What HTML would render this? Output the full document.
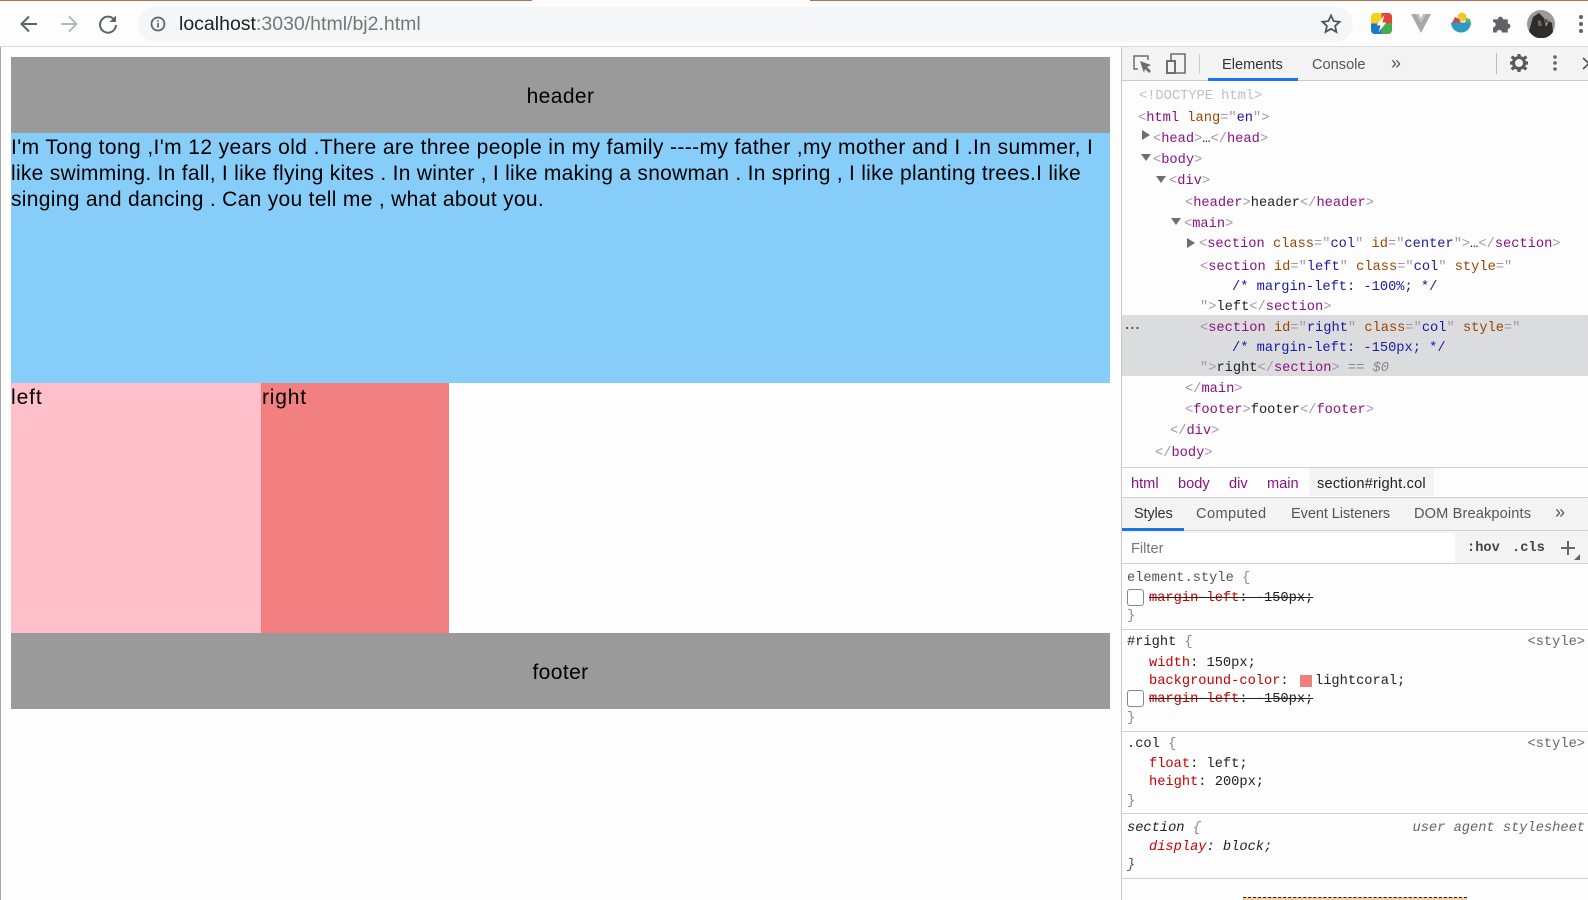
<!DOCTYPE html>
<html lang="en"><head><meta charset="utf-8"><title>localhost:3030/html/bj2.html</title>
<style>
html,body{margin:0;padding:0;width:1588px;height:900px;overflow:hidden;background:#fdfdfd;font-family:"Liberation Sans",sans-serif}
div,span.a{position:absolute}
.t{white-space:pre;color:#000}
.p{font-size:21px;line-height:26px;height:26px}
.h{font-size:21px;line-height:26px;letter-spacing:.4px}
.m{font-family:"Liberation Mono",monospace;font-size:13.7px;line-height:20px;height:20px;white-space:pre;color:#222;margin-top:2px}
.u{font-size:14.6px;line-height:20px;height:20px;white-space:pre;color:#555;margin-top:1px}
.g{color:#a894a6}.k{color:#881280}.n{color:#994500}.v{color:#1a1aa6}
.r{color:#c80000}
.s{text-decoration:line-through;text-decoration-color:#222}
.b{background:repeating-conic-gradient(#eeeeee 0 25%,#f9f9f9 0 50%) 0 0/2px 2px}
.gr{background:repeating-conic-gradient(#969696 0 25%,#9e9e9e 0 50%) 0 0/2px 2px}
.l{background:#d0d0d0;height:1px}
.cb{width:15px;height:15px;border:1px solid #888;border-radius:3px;background:#fff;left:1127px}
svg{position:absolute}
</style></head><body>
<!-- browser chrome -->
<div style="left:0;top:0;width:532px;height:1px;background:#a5745c"></div>
<div style="left:810px;top:0;width:778px;height:1px;background:#a5745c"></div>
<div style="left:0;top:46px;width:1588px;height:1px;background:#dadce0"></div>
<div style="left:0;top:47px;width:1px;height:853px;background:#aaa"></div>
<svg style="left:17px;top:12px" width="24" height="24" viewBox="0 0 24 24" fill="none" stroke="#5f6368" stroke-width="2"><path d="M20 12H5M12 4.500L4.500 12l7.500 7.500"/></svg>
<svg style="left:57px;top:12px" width="24" height="24" viewBox="0 0 24 24" fill="none" stroke="#b4b7bb" stroke-width="2"><path d="M4 12h15M12 4.500l7.500 7.500-7.500 7.500"/></svg>
<svg style="left:96px;top:12px" width="24" height="24" viewBox="0 0 24 24" fill="none" stroke="#5f6368" stroke-width="2"><path d="M18.500 8A8 8 0 1 0 20 13"/><path d="M20 3.500V10h-6.500z" fill="#5f6368" stroke="none"/></svg>
<div style="left:138px;top:7px;width:1215px;height:35px;border-radius:18px;background:repeating-conic-gradient(#eef2f5 0 25%,#fafbfc 0 50%) 0 0/2px 2px"></div>
<svg style="left:150px;top:16px" width="16" height="16" viewBox="0 0 16 16" fill="none" stroke="#5f6368" stroke-width="1.700"><circle cx="8" cy="8" r="6.500"/><path d="M8 7v4.500M8 4.200v1.600"/></svg>
<div class="t" style="left:179px;top:12px;font-size:19.500px;line-height:24px;color:#777"><span style="color:#222">localhost</span>:3030/html/bj2.html</div>
<svg style="left:1320px;top:13px" width="22" height="22" viewBox="0 0 22 22" fill="none" stroke="#555" stroke-width="1.800"><path d="M11 2.500l2.600 5.600 6 .7-4.500 4.100 1.300 6-5.400-3.100-5.400 3.100 1.300-6L2.400 8.800l6-.7z"/></svg>
<svg style="left:1371px;top:13px" width="21" height="21" viewBox="0 0 22 22"><rect width="22" height="22" rx="4" fill="#f5d020"/><path d="M11 0h7a4 4 0 0 1 4 4v7H11z" fill="#e5413a"/><path d="M11 11h11v7a4 4 0 0 1-4 4h-7z" fill="#45ae50"/><path d="M0 11h11v11H4a4 4 0 0 1-4-4z" fill="#1c78c8"/><path d="M14 2L6 13h4l-2 7 8-10h-4z" fill="#fff"/></svg>
<svg style="left:1411px;top:14px" width="20" height="19" viewBox="0 0 20 19"><path d="M0 0h7l3 5 3-5h7L10 19z" fill="#a8a8a8"/><path d="M5 0h3l2 4 2-4h3l-5 9z" fill="#c4c4c4"/></svg>
<svg style="left:1451px;top:12px" width="20" height="23" viewBox="0 0 20 23"><circle cx="11" cy="5" r="4.500" fill="#f5c32c"/><path d="M1 11l3-6 4 2 2 4z" fill="#c9484a"/><path d="M14 11l1-5 4 1 1 4z" fill="#5cb85c"/><path d="M0 10.500h20a10 10 0 0 1-20 0z" fill="#2e9ac0"/></svg>
<svg style="left:1492px;top:13px" width="20" height="20" viewBox="0 0 19 19"><path d="M1 6h4.500a2.500 2.500 0 0 1 5 0H15v4a2.500 2.500 0 0 1 0 5v3.500H9.500a2.500 2.500 0 0 0-5 0H1v-5a2.500 2.500 0 0 0 0-5z" fill="#5f6368"/></svg>
<svg style="left:1527px;top:10px" width="28" height="28" viewBox="0 0 28 28"><circle cx="14" cy="14" r="14" fill="#9a9a9a"/><path d="M2 21a14 14 0 0 0 24 1l-1-9-3-2-3 6-2-9-5-5-6 4-2 7z" fill="#2f2c2c"/><circle cx="19" cy="11" r="2" fill="#555"/><path d="M11 10l3 1 1 5-4 0z" fill="#666"/></svg>
<svg style="left:1576px;top:14px" width="10" height="20" viewBox="0 0 10 20" fill="#5f6368"><circle cx="5" cy="3" r="2"/><circle cx="5" cy="10" r="2"/><circle cx="5" cy="17" r="2"/></svg>
<!-- page -->
<div class="gr" style="left:11px;top:57px;width:1099px;height:76px"></div>
<div class="t h" style="left:11px;width:1099px;top:84px;text-align:center">header</div>
<div style="left:11px;top:133px;width:1099px;height:250px;background:#87cdf9"></div>
<div class="t p" style="left:11px;top:135px;letter-spacing:.39px">I'm Tong tong ,I'm 12 years old .There are three people in my family ----my father ,my mother and I .In summer, I</div>
<div class="t p" style="left:11px;top:161px;letter-spacing:.28px">like swimming. In fall, I like flying kites . In winter , I like making a snowman . In spring , I like planting trees.I like</div>
<div class="t p" style="left:11px;top:187px;letter-spacing:.31px">singing and dancing . Can you tell me , what about you.</div>
<div style="left:11px;top:383px;width:250px;height:250px;background:#ffc0cb"></div>
<div style="left:261px;top:383px;width:188px;height:250px;background:#f28080"></div>
<div class="t h" style="left:11px;top:385px;letter-spacing:.9px">left</div>
<div class="t h" style="left:262px;top:385px;letter-spacing:.8px">right</div>
<div class="gr" style="left:11px;top:633px;width:1099px;height:76px"></div>
<div class="t h" style="left:11px;width:1099px;top:660px;text-align:center">footer</div>
<!-- devtools -->
<div style="left:1121px;top:47px;width:1px;height:853px;background:#c8c8c8"></div>
<div class="b" style="left:1122px;top:47px;width:466px;height:33px"></div>
<div style="left:1122px;top:80px;width:466px;height:1px;background:#ccc"></div>
<svg style="left:1133px;top:55px" width="20" height="18" viewBox="0 0 20 18" fill="none" stroke="#6e6e6e" stroke-width="1.500"><path d="M5 14H1V1h14v4"/><path d="M7 6l11 4-4 2 4 4-2 2-4-4-1 4z" fill="#6e6e6e" stroke="none"/></svg>
<svg style="left:1166px;top:53px" width="20" height="21" viewBox="0 0 20 21" fill="none" stroke="#6e6e6e" stroke-width="1.600"><path d="M5 8V1h14v19H9"/><rect x="1" y="8" width="8" height="12" stroke-width="2"/></svg>
<div style="left:1199px;top:54px;width:1px;height:20px;background:#ccc"></div>
<div class="u" style="left:1222px;top:54px;color:#333">Elements</div>
<div style="left:1208px;top:78px;width:90px;height:3px;background:#1a73e8"></div>
<div class="u" style="left:1312px;top:54px">Console</div>
<div class="u" style="left:1391px;top:52px;font-size:18px;color:#555">»</div>
<div style="left:1496px;top:53px;width:1px;height:21px;background:#bbb"></div>
<svg style="left:1510px;top:54px" width="18" height="18" viewBox="0 0 18 18"><circle cx="9" cy="9" r="5.500" fill="none" stroke="#5a5a5a" stroke-width="3"/><path d="M7.500 0h3l.4 3h-3.800zM7.500 18h3l.4-3H7.100zM0 7.500v3l3 .4V7.100zM18 7.500v3l-3 .4V7.100zM2.600 1.500L.6 3.600l2.200 2.200 2.500-2.300zM15.400 16.500l2-2.100-2.200-2.200-2.500 2.300zM.6 14.400l2 2.100 2.700-2-2.500-2.300zM17.400 3.600l-2-2.100-2.700 2 2.500 2.300z" fill="#5a5a5a"/></svg>
<svg style="left:1551px;top:54px" width="8" height="18" viewBox="0 0 8 18" fill="#666"><circle cx="4" cy="3" r="1.800"/><circle cx="4" cy="9" r="1.800"/><circle cx="4" cy="15" r="1.800"/></svg>
<svg style="left:1582px;top:57px" width="6" height="13" viewBox="0 0 6 13" fill="none" stroke="#555" stroke-width="1.800"><path d="M1 1l6 5.500L1 12"/></svg>
<!-- selected row -->
<div style="left:1122px;top:315px;width:466px;height:61px;background:repeating-conic-gradient(#d5d5dc 0 25%,#e2e2e0 0 50%) 0 0/2px 2px"></div>
<div class="m" style="left:1123px;top:315px;color:#555;font-weight:bold;letter-spacing:-3px">...</div>
<!-- DOM -->
<div class="m" style="left:1139px;top:85px;color:#c0c0c0">&lt;!DOCTYPE html&gt;</div>
<div class="m" style="left:1138px;top:107px"><span class="g">&lt;</span><span class="k">html</span> <span class="n">lang</span><span class="g">="</span><span class="v">en</span><span class="g">"&gt;</span></div>
<svg style="left:1142px;top:130px" width="8" height="10"><path d="M0 0l8 5-8 5z" fill="#6e6e6e"/></svg>
<div class="m" style="left:1153px;top:128px"><span class="g">&lt;</span><span class="k">head</span><span class="g">&gt;</span>…<span class="g">&lt;/</span><span class="k">head</span><span class="g">&gt;</span></div>
<svg style="left:1141px;top:154px" width="10" height="7"><path d="M0 0h10L5 7z" fill="#6e6e6e"/></svg>
<div class="m" style="left:1153px;top:149px"><span class="g">&lt;</span><span class="k">body</span><span class="g">&gt;</span></div>
<svg style="left:1156px;top:176px" width="10" height="7"><path d="M0 0h10L5 7z" fill="#6e6e6e"/></svg>
<div class="m" style="left:1169px;top:170px"><span class="g">&lt;</span><span class="k">div</span><span class="g">&gt;</span></div>
<div class="m" style="left:1185px;top:192px"><span class="g">&lt;</span><span class="k">header</span><span class="g">&gt;</span>header<span class="g">&lt;/</span><span class="k">header</span><span class="g">&gt;</span></div>
<svg style="left:1171px;top:218px" width="10" height="7"><path d="M0 0h10L5 7z" fill="#6e6e6e"/></svg>
<div class="m" style="left:1184px;top:213px"><span class="g">&lt;</span><span class="k">main</span><span class="g">&gt;</span></div>
<svg style="left:1187px;top:238px" width="8" height="10"><path d="M0 0l8 5-8 5z" fill="#6e6e6e"/></svg>
<div class="m" style="left:1199px;top:233px"><span class="g">&lt;</span><span class="k">section</span> <span class="n">class</span><span class="g">="</span><span class="v">col</span><span class="g">"</span> <span class="n">id</span><span class="g">="</span><span class="v">center</span><span class="g">"&gt;</span>…<span class="g">&lt;/</span><span class="k">section</span><span class="g">&gt;</span></div>
<div class="m" style="left:1200px;top:256px"><span class="g">&lt;</span><span class="k">section</span> <span class="n">id</span><span class="g">="</span><span class="v">left</span><span class="g">"</span> <span class="n">class</span><span class="g">="</span><span class="v">col</span><span class="g">"</span> <span class="n">style</span><span class="g">="</span></div>
<div class="m" style="left:1232px;top:276px;color:#1a1aa6">/* margin-left: -100%; */</div>
<div class="m" style="left:1200px;top:296px"><span class="g">"&gt;</span>left<span class="g">&lt;/</span><span class="k">section</span><span class="g">&gt;</span></div>
<div class="m" style="left:1200px;top:317px"><span class="g">&lt;</span><span class="k">section</span> <span class="n">id</span><span class="g">="</span><span class="v">right</span><span class="g">"</span> <span class="n">class</span><span class="g">="</span><span class="v">col</span><span class="g">"</span> <span class="n">style</span><span class="g">="</span></div>
<div class="m" style="left:1232px;top:337px;color:#1a1aa6">/* margin-left: -150px; */</div>
<div class="m" style="left:1200px;top:357px"><span class="g">"&gt;</span>right<span class="g">&lt;/</span><span class="k">section</span><span class="g">&gt;</span> <span style="color:#888">== <i>$0</i></span></div>
<div class="m" style="left:1185px;top:378px"><span class="g">&lt;/</span><span class="k">main</span><span class="g">&gt;</span></div>
<div class="m" style="left:1185px;top:399px"><span class="g">&lt;</span><span class="k">footer</span><span class="g">&gt;</span>footer<span class="g">&lt;/</span><span class="k">footer</span><span class="g">&gt;</span></div>
<div class="m" style="left:1170px;top:420px"><span class="g">&lt;/</span><span class="k">div</span><span class="g">&gt;</span></div>
<div class="m" style="left:1155px;top:442px"><span class="g">&lt;/</span><span class="k">body</span><span class="g">&gt;</span></div>
<!-- breadcrumbs -->
<div class="l" style="left:1122px;top:467px;width:466px"></div>
<div class="b" style="left:1309px;top:468px;width:125px;height:28px"></div>
<div class="u" style="left:1131px;top:473px;color:#881280">html</div>
<div class="u" style="left:1178px;top:473px;color:#881280">body</div>
<div class="u" style="left:1229px;top:473px;color:#881280">div</div>
<div class="u" style="left:1267px;top:473px;color:#881280">main</div>
<div class="u" style="left:1317px;top:473px;color:#222;letter-spacing:.2px">section#right.col</div>
<div class="l" style="left:1122px;top:497px;width:466px"></div>
<!-- style tabs -->
<div class="b" style="left:1122px;top:498px;width:466px;height:32px"></div>
<div class="l" style="left:1122px;top:530px;width:466px"></div>
<div style="left:1122px;top:528px;width:62px;height:3px;background:#1a73e8"></div>
<div class="u" style="left:1134px;top:503px;color:#333;letter-spacing:-.2px">Styles</div>
<div class="u" style="left:1196px;top:503px;letter-spacing:.4px">Computed</div>
<div class="u" style="left:1291px;top:503px;letter-spacing:-.1px">Event Listeners</div>
<div class="u" style="left:1414px;top:503px;letter-spacing:.13px">DOM Breakpoints</div>
<div class="u" style="left:1555px;top:501px;font-size:18px">»</div>
<!-- filter -->
<div class="b" style="left:1122px;top:531px;width:466px;height:32px"></div>
<div style="left:1122px;top:533px;width:333px;height:30px;background:#fff"></div>
<div class="u" style="left:1131px;top:538px;color:#777">Filter</div>
<div class="m" style="left:1467px;top:537px;font-weight:bold;color:#444">:hov</div>
<div class="m" style="left:1512px;top:537px;font-weight:bold;color:#444">.cls</div>
<svg style="left:1561px;top:541px" width="14" height="14"><path d="M7 0v14M0 7h14" stroke="#666" stroke-width="2"/></svg>
<svg style="left:1574px;top:554px" width="6" height="6"><path d="M6 0v6H0z" fill="#666"/></svg>
<div class="l" style="left:1122px;top:563px;width:466px"></div>
<!-- styles -->
<div class="m" style="left:1127px;top:567px;color:#555">element.style <span style="color:#888">{</span></div>
<div class="cb" style="top:589px"></div>
<div class="m s" style="left:1149px;top:587px"><span class="r">margin-left</span>: -150px;</div>
<div class="m" style="left:1127px;top:605px;color:#888">}</div>
<div class="l" style="left:1122px;top:629px;width:466px"></div>
<div class="m" style="left:1127px;top:631px">#right <span style="color:#888">{</span></div>
<div class="m" style="right:3px;top:631px;color:#666">&lt;style&gt;</div>
<div class="m" style="left:1149px;top:652px"><span class="r">width</span>: 150px;</div>
<div class="m" style="left:1149px;top:670px"><span class="r">background-color</span>:</div>
<div style="left:1300px;top:675px;width:12px;height:12px;background:#f08080"></div>
<div class="m" style="left:1315px;top:670px">lightcoral;</div>
<div class="cb" style="top:690px"></div>
<div class="m s" style="left:1149px;top:688px"><span class="r">margin-left</span>: -150px;</div>
<div class="m" style="left:1127px;top:707px;color:#888">}</div>
<div class="l" style="left:1122px;top:731px;width:466px"></div>
<div class="m" style="left:1127px;top:733px">.col <span style="color:#888">{</span></div>
<div class="m" style="right:3px;top:733px;color:#666">&lt;style&gt;</div>
<div class="m" style="left:1149px;top:753px"><span class="r">float</span>: left;</div>
<div class="m" style="left:1149px;top:771px"><span class="r">height</span>: 200px;</div>
<div class="m" style="left:1127px;top:790px;color:#888">}</div>
<div class="l" style="left:1122px;top:813px;width:466px"></div>
<div class="m" style="left:1127px;top:817px;font-style:italic">section <span style="color:#888">{</span></div>
<div class="m" style="right:3px;top:817px;color:#666;font-style:italic">user agent stylesheet</div>
<div class="m" style="left:1149px;top:836px;font-style:italic"><span class="r">display</span>: block;</div>
<div class="m" style="left:1127px;top:854px;font-style:italic;color:#555">}</div>
<div class="l" style="left:1122px;top:878px;width:466px"></div>
<div style="left:1243px;top:897px;width:224px;height:3px;background:#f9cc9d;border-top:1px dashed #222;box-sizing:border-box"></div>
</body></html>
